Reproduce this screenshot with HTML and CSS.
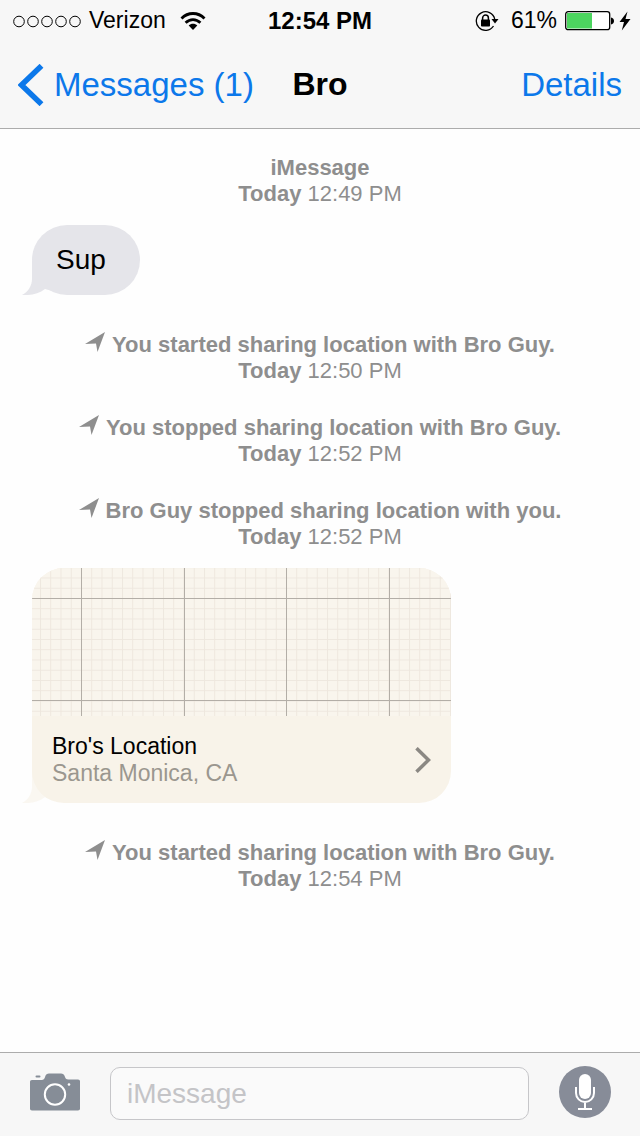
FILE: index.html
```html
<!DOCTYPE html>
<html lang="en">

<head>
    <meta charset="UTF-8">
    <meta name="viewport" content="width=device-width, initial-scale=1">
    <title>Bro</title>
    <link rel="stylesheet" href="styles.css">
</head>

<body>

    <svg class="defs" width="0" height="0">
        <symbol id="arrow" viewBox="0 0 20 20">
            <path d="M20 0 L0 12 L11 11.500 L12.500 20 Z" />
        </symbol>
        <symbol id="tail" viewBox="0 0 34 34">
            <path d="M10 0 V18 C10 25 6 31 0 34 C8 34.500 17 33 23 28 L34 31 V0 Z" />
        </symbol>
    </svg>

    <header class="top">
        <div class="status">
            <div class="status-left">
                <svg width="68" height="20" viewBox="0 0 68 20" fill="none" stroke="#000">
                    <circle cx="6" cy="10.500" r="5.300" />
                    <circle cx="20" cy="10.500" r="5.300" />
                    <circle cx="34" cy="10.500" r="5.300" />
                    <circle cx="48" cy="10.500" r="5.300" />
                    <circle cx="62" cy="10.500" r="5.300" />
                </svg>
                <span>Verizon</span>
                <svg class="wifi" width="26" height="20" viewBox="0 0 26 20" fill="none" stroke="#000" stroke-width="2.800">
                    <path d="M1.500 7.500 C8 0.800 18 0.800 24.500 7.500" />
                    <path d="M5.600 11.700 C10 7.500 16 7.500 20.400 11.700" />
                    <path d="M8.700 14.500 C11 12 15 12 17.300 14.500 L13 19 Z" fill="#000" stroke="none" />
                </svg>
            </div>
            <div class="clock">12:54 PM</div>
            <div class="status-right">
                <svg width="24" height="22" viewBox="0 0 24 22">
                    <path d="M18.500 16 A9.300 9.300 0 1 1 19.700 9" fill="none" stroke="#000" stroke-width="1.300" />
                    <path d="M16.500 9 H23.500 L20 13.500 Z" />
                    <rect x="6" y="9.500" width="9" height="7" rx="0.800" />
                    <path d="M7.600 10 V8 a2.900 2.900 0 0 1 5.800 0 V10" fill="none" stroke="#000" stroke-width="1.500" />
                </svg>
                <span class="percent">61%</span>
                <svg width="50" height="20" viewBox="0 0 50 20">
                    <rect x="0.700" y="0.700" width="44" height="18" rx="2.500" fill="#fff" stroke="#000" stroke-width="1.300" />
                    <rect x="2" y="2" width="25" height="15.500" fill="#4cd55f" />
                    <path d="M46 6.500 C50 7 50 13 46 13.500 Z" />
                </svg>
                <svg width="12" height="20" viewBox="0 0 12 20">
                    <path d="M8.500 0.500 L0.500 11 H5 L2.800 19.500 L11.500 8 H6.500 Z" />
                </svg>
            </div>
        </div>
        <nav class="nav">
            <a class="back" href="#">
                <svg width="26" height="42" viewBox="0 0 26 42" fill="none" stroke="#0c78ea" stroke-width="5.500">
                    <path d="M23.500 1.800 L3.500 21 L23.500 40.200" />
                </svg>
                Messages (1)
            </a>
            <h1 class="title">Bro</h1>
            <a class="details" href="#">Details</a>
        </nav>
    </header>

    <main class="chat">
        <div class="note">
            <strong class="note-line">iMessage</strong>
            <div><strong>Today</strong> 12:49 PM</div>
        </div>

        <div class="bubble">
            <svg class="tail" width="34" height="34"><use href="#tail" /></svg>
            <span class="bubble-text">Sup</span>
        </div>

        <div class="note">
            <strong class="note-line"><svg class="arrow" width="20" height="20"><use href="#arrow" /></svg>You started sharing location with Bro Guy.</strong>
            <div><strong>Today</strong> 12:50 PM</div>
        </div>
        <div class="note">
            <strong class="note-line"><svg class="arrow" width="20" height="20"><use href="#arrow" /></svg>You stopped sharing location with Bro Guy.</strong>
            <div><strong>Today</strong> 12:52 PM</div>
        </div>
        <div class="note">
            <strong class="note-line"><svg class="arrow" width="20" height="20"><use href="#arrow" /></svg>Bro Guy stopped sharing location with you.</strong>
            <div><strong>Today</strong> 12:52 PM</div>
        </div>

        <a class="bubble card" href="#">
            <svg class="tail" width="34" height="34"><use href="#tail" /></svg>
            <svg class="map" width="100%" height="148">
                <defs>
                    <pattern id="grid" x="49" y="30" width="10.250" height="10.250" patternUnits="userSpaceOnUse">
                        <path d="M0.500 0 V10.250 M0 0.500 H10.250" stroke="#eee7de" fill="none" />
                    </pattern>
                </defs>
                <rect width="100%" height="148" fill="#f9f5ed" />
                <rect width="100%" height="148" fill="url(#grid)" />
                <g fill="#b3aea7">
                    <rect x="49" width="1" height="148" />
                    <rect x="152" width="1" height="148" />
                    <rect x="254" width="1" height="148" />
                    <rect x="357" width="1" height="148" />
                    <rect y="30" width="100%" height="1" />
                    <rect y="132" width="100%" height="1" />
                </g>
            </svg>
            <div class="place">
                <div>
                    <div>Bro's Location</div>
                    <div class="city">Santa Monica, CA</div>
                </div>
                <svg width="16" height="26" viewBox="0 0 16 26" fill="none" stroke="#8b8883" stroke-width="3.500">
                    <path d="M1.500 1.200 L13.500 13 L1.500 24.800" />
                </svg>
            </div>
        </a>

        <div class="note">
            <strong class="note-line"><svg class="arrow" width="20" height="20"><use href="#arrow" /></svg>You started sharing location with Bro Guy.</strong>
            <div><strong>Today</strong> 12:54 PM</div>
        </div>
    </main>

    <footer class="compose">
        <button class="icon-btn" aria-label="Camera">
            <svg width="50" height="38" viewBox="0 0 50 38">
                <path d="M2 7 H11.500 C14 7 14.500 5.500 15.200 3.500 C16 1.300 17 0.500 19 0.500 H31 C33 0.500 34 1.300 34.800 3.500 C35.500 5.500 36 6.500 38.500 6.500 H48 C49.300 6.500 50 7.200 50 8.500 V35.500 C50 36.800 49.300 37.500 48 37.500 H2 C0.700 37.500 0 36.800 0 35.500 V9 C0 7.700 0.700 7 2 7 Z" fill="#868d97" />
                <rect x="5.500" y="2.500" width="5" height="2" rx="1" fill="#868d97" />
                <circle cx="25" cy="21.500" r="10.200" fill="none" stroke="#fff" stroke-width="2" />
                <circle cx="39" cy="11.500" r="1.300" fill="#fff" />
            </svg>
        </button>
        <input class="message" type="text" placeholder="iMessage" aria-label="iMessage">
        <button class="icon-btn" aria-label="Dictate">
            <svg width="52" height="52" viewBox="0 0 52 52">
                <circle cx="26" cy="26" r="26" fill="#878c98" />
                <rect x="20" y="8" width="12" height="25" rx="6" fill="#fff" />
                <path d="M17 21 V27 A9 9 0 0 0 35 27 V21 M26 36 V43 M19 43 H33" fill="none" stroke="#fff" stroke-width="2" />
            </svg>
        </button>
    </footer>

</body>

</html>
```
FILE: styles.css
```css
* {
    box-sizing: border-box;
}

body {
    margin: 0;
    min-height: 100vh;
    display: flex;
    flex-direction: column;
    background-color: #fefefe;
    color: #000;
    font-family: "Liberation Sans", Arial, sans-serif;
    font-size: 23px;
}

svg {
    display: block;
    flex-shrink: 0;
}

a {
    text-decoration: none;
}

.defs {
    position: absolute;
}

/* status bar and navigation */
.top {
    background-color: #f7f7f7;
    border-bottom: 1px solid #acacac;
}

.status {
    display: grid;
    grid-template-columns: 1fr auto 1fr;
    align-items: center;
    height: 41px;
    padding: 0 9px;
}

.status-left,
.status-right {
    display: flex;
    align-items: center;
    gap: 8px;
}

.status-left {
    padding-left: 4px;
}

.status-left .wifi {
    margin-left: 6px;
}

.status-right {
    justify-content: flex-end;
}

.status-right .percent {
    margin-left: 4px;
}

.status-right svg:last-child {
    margin-left: -4px;
}

.clock {
    font-size: 24px;
    font-weight: bold;
}

.nav {
    display: grid;
    grid-template-columns: 1fr auto 1fr;
    align-items: center;
    height: 87px;
    padding: 0 18px;
}

.back,
.details {
    color: #0c78ea;
    font-size: 33px;
}

.back {
    display: flex;
    align-items: center;
    gap: 10px;
    white-space: nowrap;
}

.details {
    text-align: right;
}

.title {
    margin: 0;
    font-size: 32px;
}

/* conversation */
.chat {
    flex: 1;
    display: flex;
    flex-direction: column;
    padding: 26px 32px;
}

.note {
    color: #8e8e8e;
    font-size: 22px;
    line-height: 26px;
    text-align: center;
}

.note + .note {
    margin-top: 31px;
}

.note-line {
    display: flex;
    justify-content: center;
    gap: 7px;
}

.arrow {
    fill: #8e8e8e;
}

.bubble {
    position: relative;
    align-self: flex-start;
    margin: 18px 0 37px;
    border-radius: 35px;
    background-color: #e5e5ea;
    fill: #e5e5ea;
    font-size: 28px;
}

.bubble-text {
    display: block;
    padding: 0 34px 0 24px;
    line-height: 70px;
}

.tail {
    position: absolute;
    left: -10px;
    bottom: 0;
}

.card {
    width: 100%;
    max-width: 419px;
    border-radius: 32px;
    background-color: #f8f3e9;
    fill: #f8f3e9;
    color: #000;
    font-size: 23px;
}

.card .tail {
    opacity: 0.6;
}

.map {
    border-radius: 32px 32px 0 0;
}

.place {
    position: relative;
    display: flex;
    align-items: center;
    justify-content: space-between;
    padding: 17px 20px 16px;
    line-height: 27px;
}

.city {
    color: #9b978f;
}

/* message box */
.compose {
    display: flex;
    align-items: center;
    gap: 30px;
    padding: 13px 29px 15px 30px;
    background-color: #f7f7f7;
    border-top: 1px solid #acacac;
}

.icon-btn {
    padding: 0 0 3px;
    border: none;
    background: none;
    cursor: pointer;
}

.message {
    flex: 1;
    min-width: 0;
    height: 53px;
    padding: 0 16px;
    border: 1px solid #c6c6c9;
    border-radius: 10px;
    background-color: #fafafa;
    font-family: inherit;
    font-size: 28px;
}

.message::placeholder {
    color: #c4c4c7;
    opacity: 1;
}
```
